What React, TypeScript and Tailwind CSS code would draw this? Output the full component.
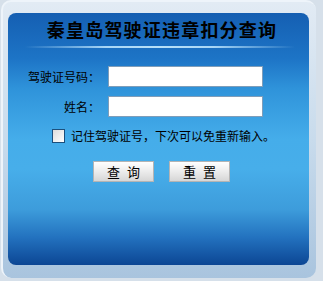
import React from "react";

export default function App() {
  const font = { fontFamily: '"Noto Sans CJK SC", "Noto Sans", sans-serif' };
  return (
    <div className="w-[323px] h-[281px] bg-[#d6e0ea] overflow-hidden" style={font}>
      <div className="ml-[1px] w-[315px] h-[278px] rounded-[10px] border-l-[2px] border-t-[2px] border-[#eef4fa] bg-[linear-gradient(to_bottom,#e2ebf4_0%,#c8dbec_50%,#a9c4de_100%)] pl-[5px] pr-[7px] pt-[11px] pb-[12px]">
        <div className="w-[301px] h-[252px] rounded-[8px] bg-[linear-gradient(to_bottom,#155fb2_0%,#1d74c6_18%,#2f93da_30%,#45adea_50%,#47aeea_62%,#3d9cdb_78%,#2372bf_89%,#0c4694_100%)] flex flex-col">
          <div className="pt-[5px] pl-[7px] h-[30px] text-center text-[18px] leading-[22px] font-bold text-black tracking-[1.2px]">
            秦皇岛驾驶证违章扣分查询
          </div>
          <div className="mt-[3px] ml-[17px] w-[270px] h-[2px] bg-[linear-gradient(to_right,rgba(160,210,245,0),#a8d6f6_30%,#b8e0f8_50%,#a8d6f6_70%,rgba(160,210,245,0))]" />
          <div className="mt-[18px] grid grid-cols-[92px_155px] gap-x-[8px] gap-y-[9px] items-center text-[12px] text-black">
            <div className="text-right leading-[21px]">驾驶证号码：</div>
            <input className="h-[21px] bg-white border border-[#7f9db9] outline-none" />
            <div className="text-right leading-[21px]">姓名：</div>
            <input className="h-[21px] bg-white border border-[#7f9db9] outline-none" />
          </div>
          <div className="mt-[12px] ml-[44px] flex items-center gap-[6px] text-[12px] text-black">
            <div className="w-[13px] h-[14px] border border-[#1c4f7c] bg-[linear-gradient(135deg,#dcdcdc,#ffffff)]" />
            <span className="leading-[14px]">记住驾驶证号，下次可以免重新输入。</span>
          </div>
          <div className="mt-[18px] ml-[85px] flex gap-[15px]">
            <button className="w-[61px] h-[21px] border border-[#b4b4b4] bg-[linear-gradient(to_bottom,#ffffff,#ececec_50%,#d6d6d6)] text-[13px] leading-[19px] text-black tracking-[7px] pl-[7px]">
              查询
            </button>
            <button className="w-[61px] h-[21px] border border-[#b4b4b4] bg-[linear-gradient(to_bottom,#ffffff,#ececec_50%,#d6d6d6)] text-[13px] leading-[19px] text-black tracking-[7px] pl-[7px]">
              重置
            </button>
          </div>
        </div>
      </div>
    </div>
  );
}
